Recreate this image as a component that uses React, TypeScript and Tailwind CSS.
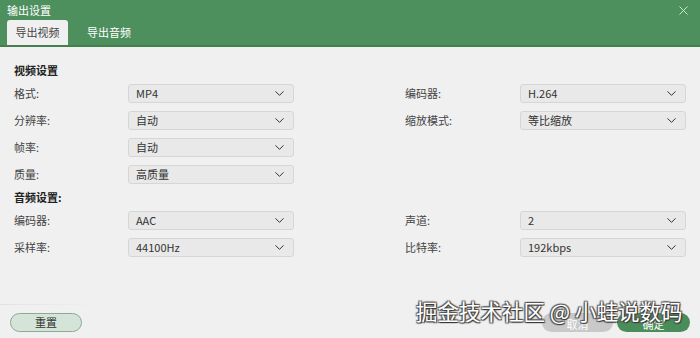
import { ChevronDown, X } from "lucide-react"

const FONT = { fontFamily: '"Noto Sans CJK SC", "Noto Sans", "Liberation Sans", sans-serif' }

function Select({ value }: { value: string }) {
  return (
    <div className="flex h-[19px] w-[166px] items-center justify-between rounded-[3px] border border-[#d6d6d6] bg-[#e9e9e9] pl-[7px] pr-[6px] text-[11px] text-[#333]">
      <span>{value}</span>
      <ChevronDown className="h-[15px] w-[15px] text-[#333]" strokeWidth={1.6} />
    </div>
  )
}

function Row({ label, value, w = "w-[114px]" }: { label: string; value: string; w?: string }) {
  return (
    <div className="flex h-[19px] items-center">
      <div className={`${w} text-[11px] text-[#444]`}>{label}</div>
      <Select value={value} />
    </div>
  )
}

export default function App() {
  return (
    <div className="relative flex h-[338px] w-[700px] flex-col overflow-hidden bg-[#f0f0f0]" style={FONT}>
      {/* header */}
      <div className="flex h-[47px] flex-col border-b-2 border-[#44804f] bg-[#4e8f5e]">
        <div className="flex h-[21px] items-center justify-between pl-[7px] pr-[9px]">
          <span className="text-[11px] text-white">输出设置</span>
          <X className="h-[15px] w-[15px] text-[#cdf3d4]" strokeWidth={1.5} />
        </div>
        <div className="flex flex-1 items-end pl-[7px]">
          <div className="flex h-[25px] w-[61px] items-center justify-center rounded-t-[3px] bg-[#f0f0f0] text-[11px] text-[#444]">
            导出视频
          </div>
          <div className="flex h-[25px] w-[82px] items-center justify-center text-[11px] text-white">导出音频</div>
        </div>
      </div>

      {/* body */}
      <div className="flex flex-col pl-[14px] pt-[15px]">
        <div className="h-[17px] text-[11px] font-bold text-[#222]">视频设置</div>
        <div className="mt-[5px] grid grid-cols-[391px_1fr] gap-y-[8px]">
          <Row label="格式:" value="MP4" />
          <Row label="编码器:" value="H.264" w="w-[115px]" />
          <Row label="分辨率:" value="自动" />
          <Row label="缩放模式:" value="等比缩放" w="w-[115px]" />
          <Row label="帧率:" value="自动" />
          <div />
          <Row label="质量:" value="高质量" />
          <div />
        </div>
        <div className="mt-[5px] h-[17px] text-[11px] font-bold text-[#222]">音频设置:</div>
        <div className="mt-[5px] grid grid-cols-[391px_1fr] gap-y-[8px]">
          <Row label="编码器:" value="AAC" />
          <Row label="声道:" value="2" w="w-[115px]" />
          <Row label="采样率:" value="44100Hz" />
          <Row label="比特率:" value="192kbps" w="w-[115px]" />
        </div>
      </div>

      {/* footer */}
      <div className="mt-auto h-px w-[100px] bg-gradient-to-r from-[#e2e2e2] to-transparent" />
      <div className="flex h-[33px] items-start justify-between pl-[10px] pr-[10px] pt-[8px]">
        <button className="flex h-[19px] w-[72px] items-center justify-center rounded-full border border-[#8ea996] bg-[#d4e4d9] text-[11px] text-[#333]">
          重置
        </button>
        <div className="flex gap-[4px]">
          <button className="flex h-[19px] w-[71px] items-end justify-center rounded-full bg-[#c9c9c9] text-[11px] text-white">
            取消
          </button>
          <button className="flex h-[19px] w-[73px] items-end justify-center rounded-full bg-[#4a8c5a] text-[11px] text-white">
            确定
          </button>
        </div>
      </div>

      {/* watermark */}
      <div
        className="absolute left-[416px] top-[296px] text-[21.5px] leading-[30px] text-white"
        style={{ textShadow: "1px 1px 1px #333, -1px -1px 1px #555, 1px -1px 1px #555, -1px 1px 1px #555" }}
      >
        掘金技术社区 @ 小蛙说数码
      </div>
    </div>
  )
}
